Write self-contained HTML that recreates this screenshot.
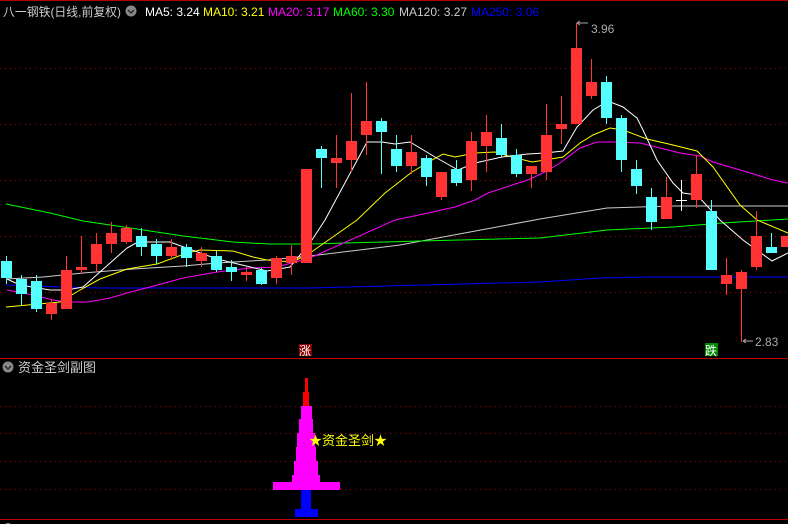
<!DOCTYPE html>
<html><head><meta charset="utf-8"><style>
html,body{margin:0;padding:0;background:#000;width:788px;height:524px;overflow:hidden}
svg{display:block}
text{font-family:"Liberation Sans","Noto Sans CJK SC",sans-serif}
</style></head><body>
<svg width="788" height="524" viewBox="0 0 788 524" xmlns="http://www.w3.org/2000/svg">
<rect width="788" height="524" fill="#000"/>
<line x1="0" y1="0.5" x2="788" y2="0.5" stroke="#a00" />
<g stroke="#a00" stroke-dasharray="1,4" stroke-width="1">
<line x1="0" y1="68.5" x2="788" y2="68.5"/><line x1="0" y1="124.5" x2="788" y2="124.5"/>
<line x1="0" y1="180.5" x2="788" y2="180.5"/><line x1="0" y1="236.5" x2="788" y2="236.5"/>
<line x1="0" y1="292.5" x2="788" y2="292.5"/>
<line x1="0" y1="406.5" x2="788" y2="406.5"/><line x1="0" y1="433.5" x2="788" y2="433.5"/>
<line x1="0" y1="461.5" x2="788" y2="461.5"/><line x1="0" y1="489.5" x2="788" y2="489.5"/>
</g>
<line x1="0" y1="358.5" x2="788" y2="358.5" stroke="#b00"/>
<line x1="0" y1="519.5" x2="788" y2="519.5" stroke="#b00"/>

<!-- header -->
<text x="3" y="16" font-size="12" fill="#ccc" textLength="118" lengthAdjust="spacingAndGlyphs">八一钢铁(日线,前复权)</text>
<circle cx="131" cy="11" r="5.5" fill="#888"/><path d="M128,10 l3,3 l3,-3" stroke="#222" fill="none" stroke-width="1.3"/>
<text x="145" y="16" font-size="12" fill="#fff">MA5: 3.24</text>
<text x="203" y="16" font-size="12" fill="#ff0">MA10: 3.21</text>
<text x="268" y="16" font-size="12" fill="#f0f">MA20: 3.17</text>
<text x="333" y="16" font-size="12" fill="#0f0">MA60: 3.30</text>
<text x="399" y="16" font-size="12" fill="#ccc">MA120: 3.27</text>
<text x="471" y="16" font-size="12" fill="#00f">MA250: 3.06</text>

<!-- MAs -->
<g fill="none" stroke-width="1">
<polyline stroke="#00f" points="6,285 60,287 100,288 200,288 310,288 540,282 600,278 647,277 788,277"/>
<polyline stroke="#ccc" points="6,279 43,277 83,273 133,269 183,266 217,263 267,260 310,256 400,245 470,232 540,219 607,208 673,206 788,206"/>
<polyline stroke="#0f0" points="6,204 50,213 83,221 117,226 150,231 183,236 233,242 270,244 310,244 420,241 540,238 607,230 673,227 723,223 788,219"/>
<polyline stroke="#f0f" points="7,290 33,295 53,300 67,302 88,302 110,298 127,293 150,287 183,278 217,272 250,268 277,267 310,258 395,220 428,213 455,207 475,200 488,193 512,185 528,180 545,172 560,163 580,148 597,142 613,142 640,143 680,153 700,156 713,162 747,172 773,180 788,183"/>
<polyline stroke="#ff0" points="6,307 60,302 80,290 100,279 127,269 157,264 187,253 200,250 233,251 253,257 267,260 293,262 310,253 357,220 385,193 412,172 432,160 443,154 455,157 475,153 495,152 508,156 532,162 545,160 563,157 580,143 593,135 610,128 623,130 647,139 673,145 697,151 713,167 740,205 757,220 788,233"/>
<polyline stroke="#fff" points="7,279 20,285 50,290 67,290 83,287 127,248 138,242 170,242 217,259 267,271 290,267 310,243 325,220 367,142 382,142 395,144 410,142 435,157 458,170 475,163 502,157 528,154 545,153 563,151 577,127 593,110 608,101 623,107 637,118 643,130 657,160 673,183 683,193 697,195 720,220 743,240 772,261 788,253"/>
</g>

<g shape-rendering="crispEdges">
<g fill="#5ff" stroke="none">
<rect x="6" y="256" width="1" height="28"/><rect x="1" y="261" width="11" height="17"/>
<rect x="21" y="275" width="1" height="30"/><rect x="16" y="279" width="11" height="15"/>
<rect x="36" y="275" width="1" height="37"/><rect x="31" y="281" width="11" height="28"/>
<rect x="141" y="228" width="1" height="28"/><rect x="136" y="236" width="11" height="11"/>
<rect x="156" y="239" width="1" height="25"/><rect x="151" y="244" width="11" height="12"/>
<rect x="186" y="244" width="1" height="23"/><rect x="181" y="247" width="11" height="11"/>
<rect x="216" y="251" width="1" height="21"/><rect x="211" y="256" width="11" height="14"/>
<rect x="231" y="260" width="1" height="21"/><rect x="226" y="267" width="11" height="5"/>
<rect x="261" y="268" width="1" height="17"/><rect x="256" y="270" width="11" height="14"/>
<rect x="321" y="146" width="1" height="42"/><rect x="316" y="149" width="11" height="9"/>
<rect x="381" y="118" width="1" height="56"/><rect x="376" y="121" width="11" height="11"/>
<rect x="396" y="135" width="1" height="37"/><rect x="391" y="149" width="11" height="17"/>
<rect x="426" y="155" width="1" height="31"/><rect x="421" y="158" width="11" height="19"/>
<rect x="456" y="160" width="1" height="26"/><rect x="451" y="169" width="11" height="14"/>
<rect x="501" y="124" width="1" height="33"/><rect x="496" y="138" width="11" height="17"/>
<rect x="516" y="149" width="1" height="28"/><rect x="511" y="155" width="11" height="19"/>
<rect x="606" y="76" width="1" height="48"/><rect x="601" y="82" width="11" height="36"/>
<rect x="621" y="115" width="1" height="57"/><rect x="616" y="118" width="11" height="42"/>
<rect x="636" y="160" width="1" height="34"/><rect x="631" y="169" width="11" height="17"/>
<rect x="651" y="188" width="1" height="42"/><rect x="646" y="197" width="11" height="25"/>
<rect x="711" y="200" width="1" height="70"/><rect x="706" y="211" width="11" height="59"/>
<rect x="771" y="233" width="1" height="20"/><rect x="766" y="247" width="11" height="6"/>
</g>
<g fill="#f33">
<rect x="51" y="299" width="1" height="21"/><rect x="46" y="303" width="11" height="11"/>
<rect x="66" y="256" width="1" height="53"/><rect x="61" y="270" width="11" height="39"/>
<rect x="81" y="236" width="1" height="38"/><rect x="76" y="267" width="11" height="3"/>
<rect x="96" y="233" width="1" height="39"/><rect x="91" y="244" width="11" height="20"/>
<rect x="111" y="222" width="1" height="31"/><rect x="106" y="233" width="11" height="11"/>
<rect x="126" y="225" width="1" height="19"/><rect x="121" y="228" width="11" height="14"/>
<rect x="171" y="239" width="1" height="21"/><rect x="166" y="247" width="11" height="9"/>
<rect x="201" y="247" width="1" height="20"/><rect x="196" y="253" width="11" height="8"/>
<rect x="246" y="267" width="1" height="14"/><rect x="241" y="272" width="11" height="3"/>
<rect x="276" y="256" width="1" height="28"/><rect x="271" y="258" width="11" height="20"/>
<rect x="291" y="245" width="1" height="30"/><rect x="286" y="256" width="11" height="7"/>
<rect x="301" y="169" width="11" height="94"/>
<rect x="336" y="135" width="1" height="53"/><rect x="331" y="158" width="11" height="5"/>
<rect x="351" y="93" width="1" height="79"/><rect x="346" y="141" width="11" height="19"/>
<rect x="366" y="82" width="1" height="73"/><rect x="361" y="121" width="11" height="14"/>
<rect x="411" y="135" width="1" height="39"/><rect x="406" y="152" width="11" height="14"/>
<rect x="441" y="172" width="1" height="28"/><rect x="436" y="172" width="11" height="25"/>
<rect x="471" y="132" width="1" height="59"/><rect x="466" y="141" width="11" height="39"/>
<rect x="486" y="115" width="1" height="57"/><rect x="481" y="132" width="11" height="14"/>
<rect x="531" y="166" width="1" height="22"/><rect x="526" y="166" width="11" height="8"/>
<rect x="546" y="104" width="1" height="76"/><rect x="541" y="135" width="11" height="37"/>
<rect x="561" y="96" width="1" height="48"/><rect x="556" y="124" width="11" height="5"/>
<rect x="576" y="23" width="1" height="101"/><rect x="571" y="48" width="11" height="76"/>
<rect x="591" y="59" width="1" height="40"/><rect x="586" y="82" width="11" height="14"/>
<rect x="666" y="177" width="1" height="42"/><rect x="661" y="197" width="11" height="22"/>
<rect x="696" y="155" width="1" height="53"/><rect x="691" y="174" width="11" height="26"/>
<rect x="726" y="258" width="1" height="37"/><rect x="721" y="275" width="11" height="9"/>
<rect x="741" y="270" width="1" height="72"/><rect x="736" y="272" width="11" height="17"/>
<rect x="756" y="211" width="1" height="59"/><rect x="751" y="236" width="11" height="31"/>
<rect x="781" y="236" width="7" height="11"/>
</g>
<rect x="681" y="180" width="1" height="31" fill="#fff"/><rect x="676" y="200" width="11" height="1" fill="#fff"/>
</g>

<!-- labels -->
<path d="M577,23 H588 M577,23 l3,-2 M577,23 l3,2" stroke="#aaa" fill="none"/>
<text x="591" y="33" font-size="12" fill="#aaa">3.96</text>
<path d="M743,341 H753 M743,341 l3,-2 M743,341 l3,2" stroke="#aaa" fill="none"/>
<text x="755" y="346" font-size="12" fill="#aaa">2.83</text>
<rect x="299" y="344" width="13" height="12" fill="#800"/>
<text x="299" y="355" font-size="12" fill="#fff">涨</text>
<rect x="705" y="343" width="13" height="13" fill="#080"/>
<text x="705" y="355" font-size="12" fill="#fff">跌</text>

<!-- sub panel -->
<circle cx="8" cy="367" r="5.5" fill="#888"/><path d="M5,366 l3,3 l3,-3" stroke="#222" fill="none" stroke-width="1.3"/>
<text x="18" y="372" font-size="13" fill="#ccc">资金圣剑副图</text>
<g shape-rendering="crispEdges">
<rect x="305" y="378" width="3" height="14" fill="#f00"/>
<rect x="303" y="392" width="6" height="14" fill="#f00"/>
<g fill="#f0f">
<rect x="301" y="406" width="11" height="13"/>
<rect x="299" y="419" width="14" height="14"/>
<rect x="297" y="433" width="18" height="14"/>
<rect x="296" y="447" width="20" height="14"/>
<rect x="294" y="461" width="24" height="14"/>
<rect x="292" y="475" width="28" height="7"/>
<rect x="273" y="482" width="67" height="8"/>
</g>
<rect x="301" y="490" width="10" height="20" fill="#00f"/>
<rect x="295" y="509" width="23" height="8" fill="#00f"/>
</g>
<text x="309" y="445" font-size="13" fill="#ff0">★资金圣剑★</text>
<circle cx="8" cy="528" r="5" fill="#888"/>
</svg>
</body></html>
